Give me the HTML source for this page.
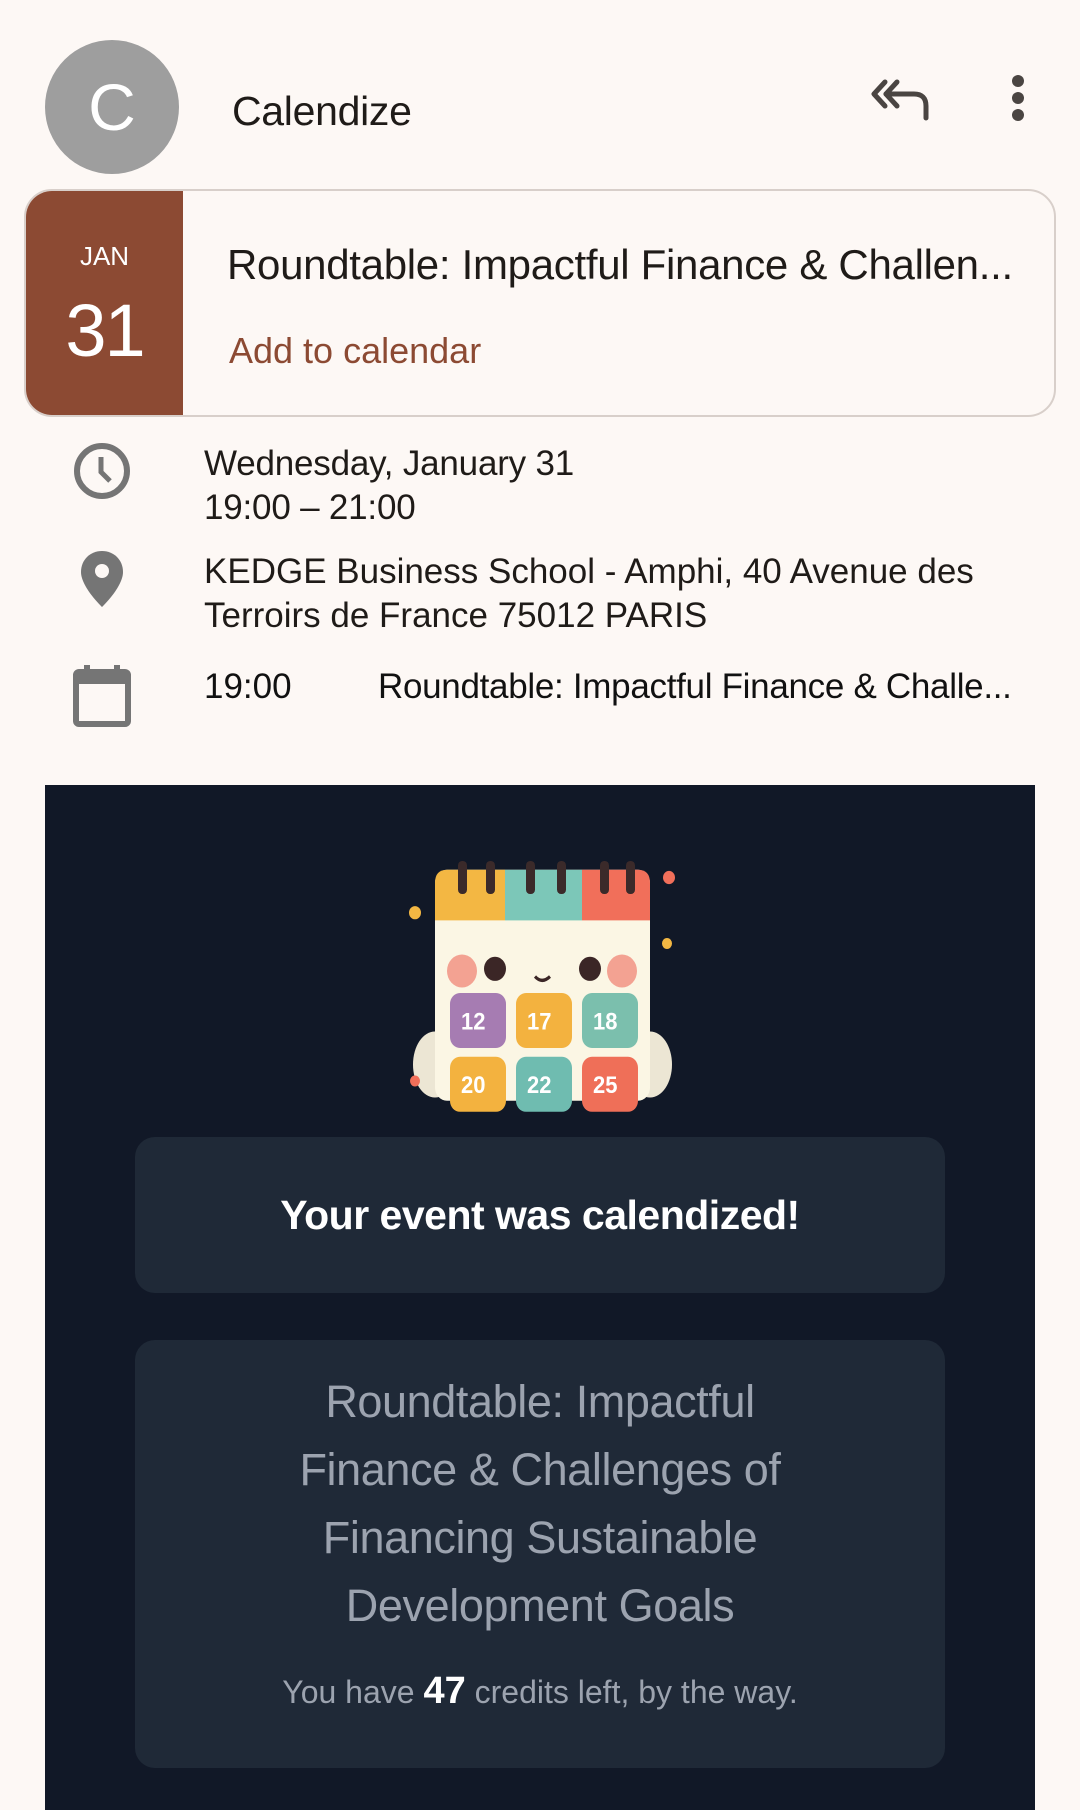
<!DOCTYPE html>
<html><head><meta charset="utf-8"><style>
*{margin:0;padding:0;box-sizing:border-box}
body{width:1080px;height:1810px;background:#fdf8f5;font-family:"Liberation Sans",sans-serif;position:relative;overflow:hidden;color:#1f1b18}
.a{position:absolute}
</style></head><body>
<div class="a" style="left:45px;top:40px;width:134px;height:134px;border-radius:50%;background:#9e9e9e;color:#fff;font-size:66px;line-height:134px;text-align:center">C</div>
<div class="a" style="left:232px;top:88px;font-size:41px;letter-spacing:-0.3px">Calendize</div>
<svg class="a" style="left:870px;top:74px" width="64" height="50" viewBox="0 0 64 50"><g fill="none" stroke="#4a4542" stroke-width="5" stroke-linejoin="round" stroke-linecap="round"><path d="M15 8L4 20L15 32"/><path d="M27 8L16 20L27 32"/><path d="M16 20H44Q56 20 56 32V44"/></g></svg>
<svg class="a" style="left:1008px;top:74px" width="20" height="48"><circle cx="10" cy="7" r="6" fill="#4a4542"/><circle cx="10" cy="24" r="6" fill="#4a4542"/><circle cx="10" cy="41" r="6" fill="#4a4542"/></svg>

<div class="a" style="left:24px;top:189px;width:1032px;height:228px;border:2px solid #d8cfca;border-radius:28px;overflow:hidden;background:#fdf8f5">
<div class="a" style="left:0;top:0;width:157px;height:228px;background:#8c4a33;color:#fff;text-align:center">
<div style="font-size:26px;margin-top:50px">JAN</div>
<div style="font-size:74px;margin-top:16px;letter-spacing:-2px">31</div></div>
<div class="a" style="left:201px;top:50px;font-size:42px;white-space:nowrap;letter-spacing:-0.3px">Roundtable: Impactful Finance &amp; Challen...</div>
<div class="a" style="left:203px;top:139px;font-size:36px;color:#8c4a33">Add to calendar</div>
</div>

<svg class="a" style="left:72px;top:441px" width="60" height="60" viewBox="0 0 60 60"><circle cx="30" cy="30" r="25" fill="none" stroke="#757575" stroke-width="6"/><path d="M29 16V31L38 40" fill="none" stroke="#757575" stroke-width="5"/></svg>
<div class="a" style="left:204px;top:442px;font-size:35px;line-height:44px;letter-spacing:-0.2px">Wednesday, January 31<br>19:00 – 21:00</div>
<svg class="a" style="left:78px;top:549px" width="48" height="60" viewBox="0 0 48 60"><path d="M24 2C12 2 3 11 3 23C3 38 24 58 24 58C24 58 45 38 45 23C45 11 36 2 24 2Z" fill="#757575"/><circle cx="24" cy="22" r="7" fill="#fdf8f5"/></svg>
<div class="a" style="left:204px;top:550px;font-size:35px;line-height:44px;letter-spacing:0px">KEDGE Business School - Amphi, 40 Avenue des<br>Terroirs de France 75012 PARIS</div>
<svg class="a" style="left:72px;top:664px" width="60" height="64" viewBox="0 0 60 64"><rect x="4" y="8" width="52" height="52" rx="3" fill="none" stroke="#757575" stroke-width="6"/><rect x="4" y="8" width="52" height="12" fill="#757575"/><rect x="12" y="1" width="6" height="10" fill="#757575"/><rect x="42" y="1" width="6" height="10" fill="#757575"/></svg>
<div class="a" style="left:204px;top:667px;font-size:35px;color:#111">19:00</div>
<div class="a" style="left:378px;top:667px;font-size:35px;letter-spacing:-0.3px;white-space:nowrap;color:#111">Roundtable: Impactful Finance &amp; Challe...</div>

<div class="a" style="left:45px;top:785px;width:990px;height:1025px;background:#111827"></div>
<svg class="a" style="left:405px;top:828px" width="275" height="286" viewBox="0 0 275 260" preserveAspectRatio="none">
<ellipse cx="30" cy="215" rx="22" ry="30" fill="#ece6d4"/><ellipse cx="245" cy="215" rx="22" ry="30" fill="#ece6d4"/>
<rect x="30" y="38" width="215" height="210" rx="12" fill="#fbf6e4"/>
<path d="M42 38H100V84H30V50Q30 38 42 38Z" fill="#f3b743"/><rect x="100" y="38" width="77" height="46" fill="#7cc7b8"/><path d="M177 38H233Q245 38 245 50V84H177Z" fill="#f16f5a"/>
<g fill="#3b2a2a"><rect x="53" y="30" width="9" height="30" rx="4"/><rect x="81" y="30" width="9" height="30" rx="4"/><rect x="121" y="30" width="9" height="30" rx="4"/><rect x="152" y="30" width="9" height="30" rx="4"/><rect x="195" y="30" width="9" height="30" rx="4"/><rect x="221" y="30" width="9" height="30" rx="4"/></g>
<circle cx="57" cy="130" r="15" fill="#f3a292"/><circle cx="217" cy="130" r="15" fill="#f3a292"/><circle cx="90" cy="128" r="11" fill="#3b2626"/><circle cx="185" cy="128" r="11" fill="#3b2626"/>
<path d="M130 135Q137 142 145 135" stroke="#3b2626" stroke-width="3" fill="none"/>
<rect x="45" y="150" width="56" height="50" rx="10" fill="#a67cb2"/><rect x="111" y="150" width="56" height="50" rx="10" fill="#f3b23f"/><rect x="177" y="150" width="56" height="50" rx="10" fill="#7bbfad"/>
<rect x="45" y="208" width="56" height="50" rx="10" fill="#f3b23f"/><rect x="111" y="208" width="56" height="50" rx="10" fill="#6fbcb0"/><rect x="177" y="208" width="56" height="50" rx="10" fill="#ef6f58"/>
<g fill="#fff" font-family="Liberation Sans" font-weight="bold" font-size="22"><text x="56" y="183">12</text><text x="122" y="183">17</text><text x="188" y="183">18</text><text x="56" y="241">20</text><text x="122" y="241">22</text><text x="188" y="241">25</text></g>
<circle cx="10" cy="77" r="6" fill="#f3b743"/><circle cx="262" cy="105" r="5" fill="#f3b743"/><circle cx="264" cy="45" r="6" fill="#f16f5a"/><circle cx="10" cy="230" r="5" fill="#f16f5a"/>
</svg>

<div class="a" style="left:135px;top:1137px;width:810px;height:156px;background:#1f2937;border-radius:20px;color:#fff;font-weight:bold;font-size:41px;text-align:center;line-height:156px;letter-spacing:-0.5px">Your event was calendized!</div>
<div class="a" style="left:135px;top:1340px;width:810px;height:428px;background:#1f2937;border-radius:20px;text-align:center;color:#9ca3af">
<div style="font-size:45px;line-height:68px;padding:28px 120px 0;letter-spacing:-0.4px">Roundtable: Impactful Finance &amp; Challenges of Financing Sustainable Development Goals</div>
<div style="font-size:32px;margin-top:30px">You have <b style="color:#fff;font-size:38px">47</b> credits left, by the way.</div>
</div>
</body></html>
